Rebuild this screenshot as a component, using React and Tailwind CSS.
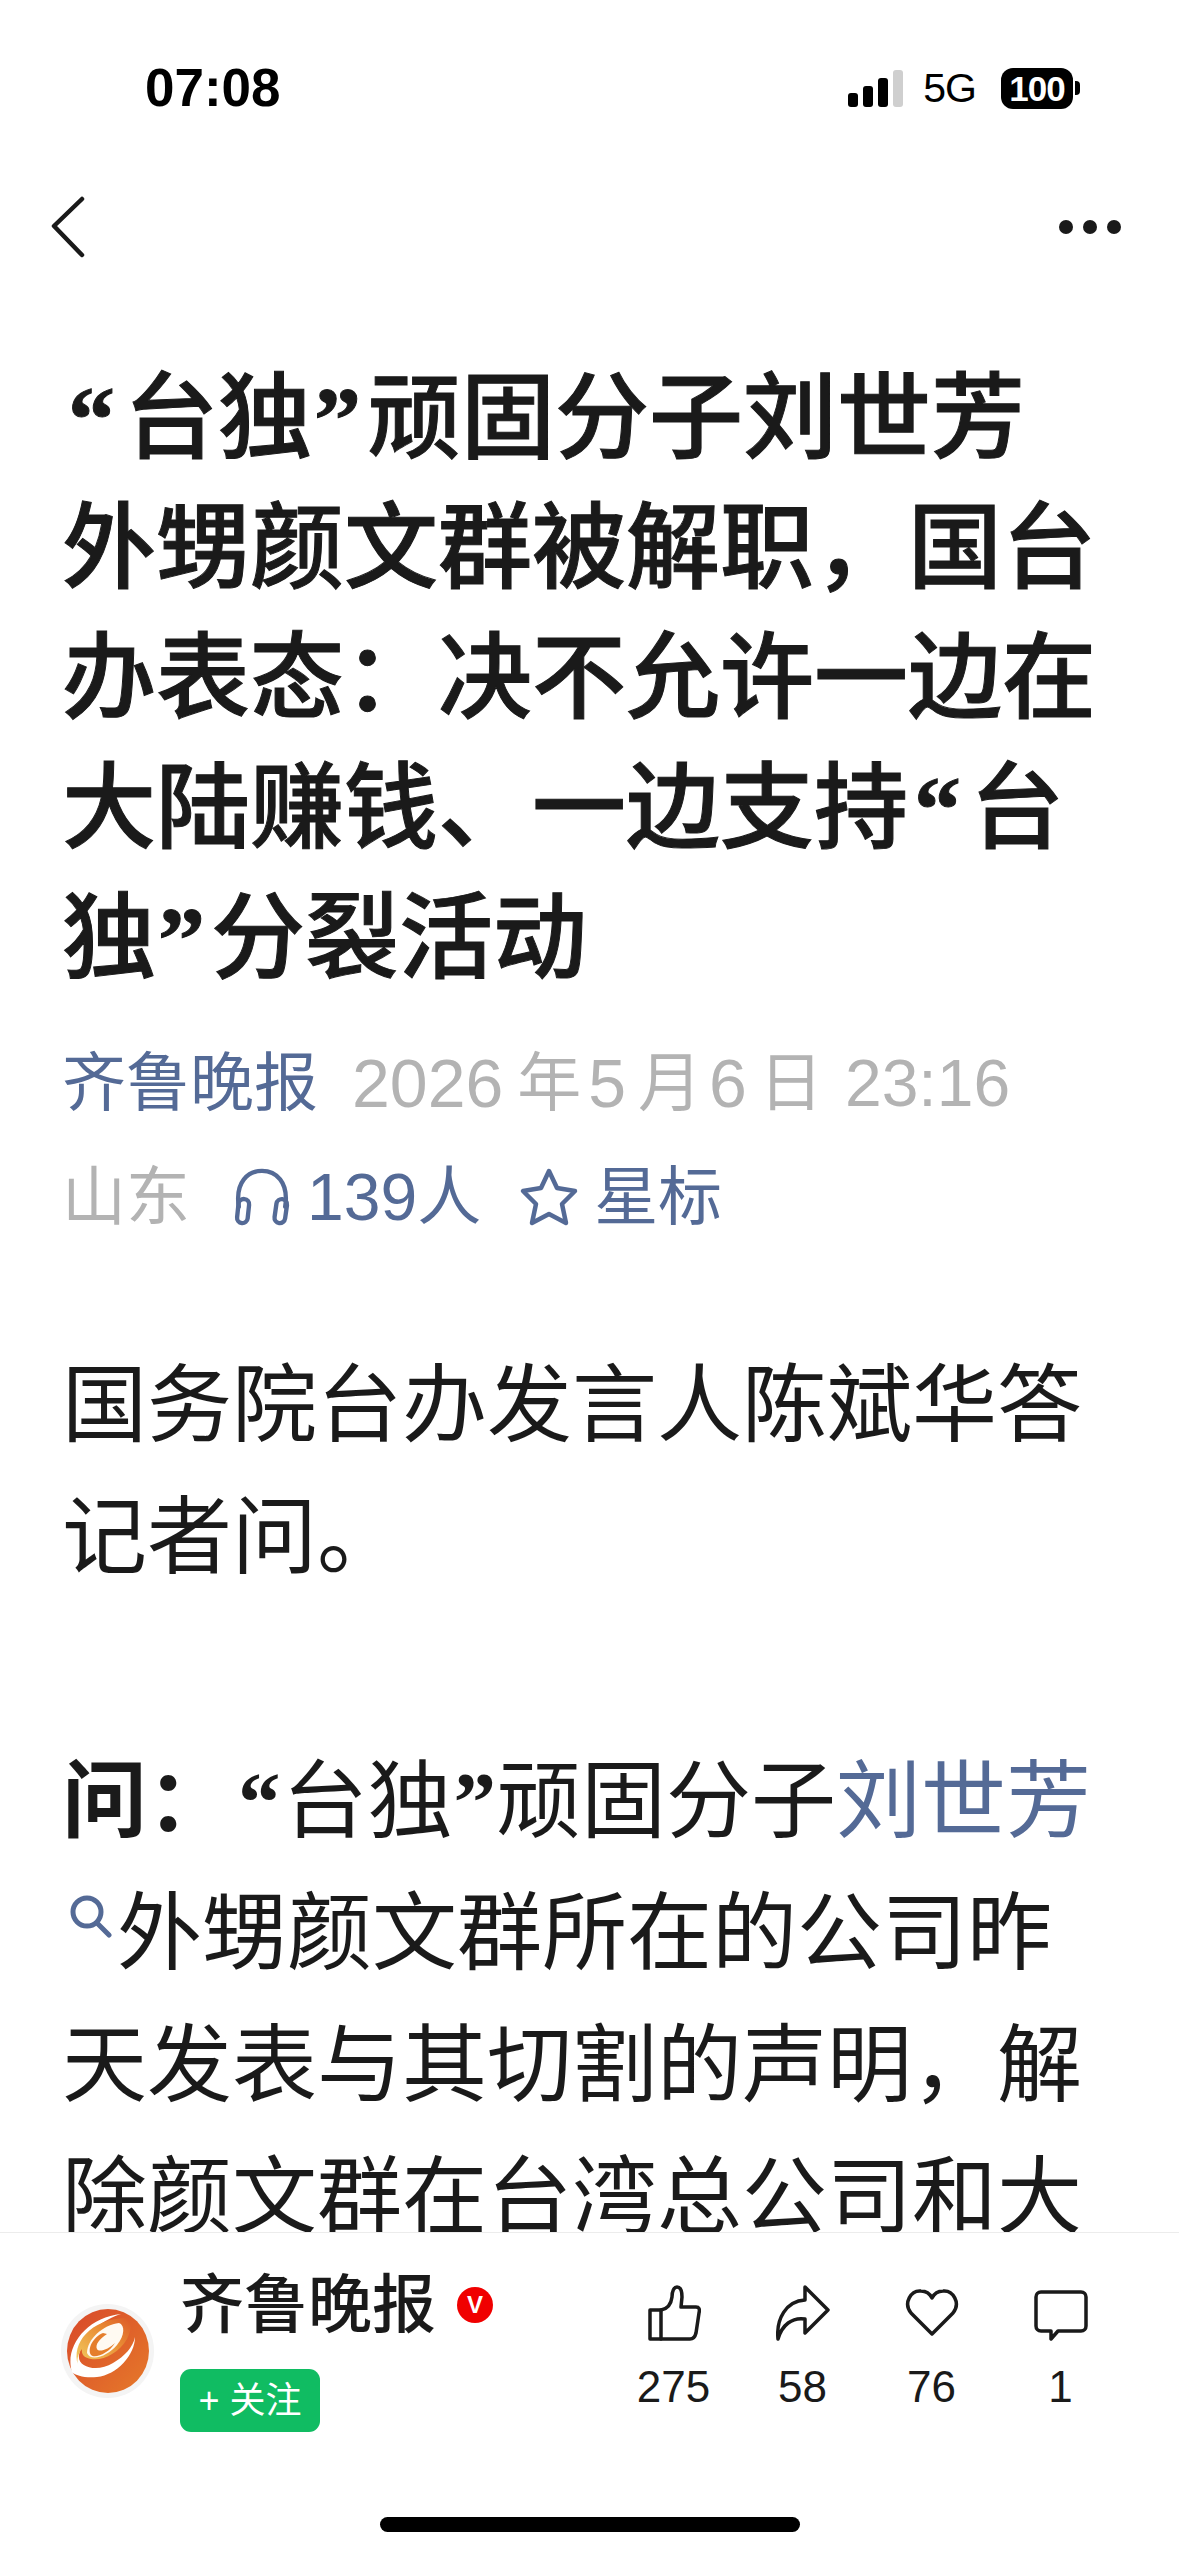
const cjk = { fontFamily: '"Liberation Sans", "Noto Sans CJK SC", sans-serif' };

const TitleOpen = () => <span className="font-bold [font-family:'Liberation_Serif'] ml-[6px] mr-[9px]">“</span>;
const TitleClose = () => <span className="font-bold [font-family:'Liberation_Serif'] ml-[2px] mr-[6px]">”</span>;
const BodyOpen = () => <span className="font-bold [font-family:'Liberation_Serif'] ml-[6px] mr-[2px]">“</span>;
const BodyClose = () => <span className="font-bold [font-family:'Liberation_Serif'] ml-[1px] mr-[0px]">”</span>;

function StatusBar() {
  return (
    <div className="flex items-center justify-between h-[176px] pl-[145px] pr-[99px]">
      <span className="text-[53px] font-bold text-black">07:08</span>
      <div className="flex items-center">
        <div className="flex items-end gap-[5px] h-[37px]">
          <div className="w-[10px] h-[14px] bg-black rounded-[3px]" />
          <div className="w-[10px] h-[21px] bg-black rounded-[3px]" />
          <div className="w-[10px] h-[29px] bg-black rounded-[3px]" />
          <div className="w-[10px] h-[37px] bg-[#cfcfcf] rounded-[3px]" />
        </div>
        <span className="ml-[20px] text-[41px] text-black leading-none tracking-[-1px]">5G</span>
        <div className="ml-[25px] flex items-center">
          <div className="w-[72px] h-[41px] bg-black rounded-[12px] flex items-center justify-center text-white font-bold text-[35px] leading-none tracking-[-1px]">100</div>
          <div className="w-[5px] h-[14px] bg-black rounded-r-[4px] ml-[2px]" />
        </div>
      </div>
    </div>
  );
}

function NavBar() {
  return (
    <div className="flex items-center justify-between pl-[50px] pr-[58px] h-[62px] mt-[20px]">
      <svg width="36" height="62" viewBox="0 0 36 62" fill="none" stroke="#1a1a1a" strokeWidth="4.5" strokeLinecap="round" strokeLinejoin="round">
        <path d="M32 3 L4 30 L32 59" />
      </svg>
      <div className="flex gap-[10px]">
        <div className="w-[14px] h-[14px] rounded-full bg-[#1a1a1a]" />
        <div className="w-[14px] h-[14px] rounded-full bg-[#1a1a1a]" />
        <div className="w-[14px] h-[14px] rounded-full bg-[#1a1a1a]" />
      </div>
    </div>
  );
}

function Article() {
  return (
    <div className="pl-[62px] whitespace-nowrap">
      <h1 className="text-[94px] font-medium leading-[130px] text-[#1a1a1a] mt-[96px] [-webkit-text-stroke:1px_#1a1a1a]">
        <div><TitleOpen />台独<TitleClose />顽固分子刘世芳</div>
        <div>外甥颜文群被解职，国台</div>
        <div>办表态：决不允许一边在</div>
        <div>大陆赚钱、一边支持<TitleOpen />台</div>
        <div>独<TitleClose />分裂活动</div>
      </h1>

      <div className="mt-[22px] text-[64px] leading-[114px]">
        <div className="flex items-center">
          <span className="text-[#546a96]">齐鲁晚报</span>
          <span className="flex items-center text-[#b3b3b3] ml-[34px]">
            <span className="text-[68px]">2026</span>
            <span className="ml-[14px]">年</span>
            <span className="ml-[7px] text-[68px]">5</span>
            <span className="ml-[12px]">月</span>
            <span className="ml-[7px] text-[68px]">6</span>
            <span className="ml-[12px]">日</span>
            <span className="ml-[22px] text-[66px]">23:16</span>
          </span>
        </div>
        <div className="flex items-center">
          <span className="text-[#b3b3b3]">山东</span>
          <svg className="ml-[43px]" width="58" height="58" viewBox="0 0 60 60" fill="none" stroke="#546a96" strokeWidth="4.5" strokeLinecap="round">
            <path d="M6 40 C2 14 16 3 30 3 C44 3 58 14 54 40" />
            <rect x="5" y="32" width="11" height="25" rx="5.5" transform="rotate(6 10 44)" />
            <rect x="44" y="32" width="11" height="25" rx="5.5" transform="rotate(8 49 44)" />
          </svg>
          <span className="text-[#546a96] ml-[16px] flex items-center">
            <span className="text-[66px]">139</span>
            <span>人</span>
          </span>
          <svg className="ml-[38px]" width="60" height="60" viewBox="0 0 60 60" fill="none" stroke="#546a96" strokeWidth="4.5" strokeLinejoin="round">
            <path d="M30 4 L38 21 L56 24 L43 37 L47 56 L30 47 L13 56 L17 37 L4 24 L22 21 Z" />
          </svg>
          <span className="text-[#546a96] ml-[15px]">星标</span>
        </div>
      </div>

      <div className="mt-[86px] text-[85px] leading-[132px] text-[#1a1a1a]">
        <div>国务院台办发言人陈斌华答</div>
        <div>记者问。</div>
        <div className="h-[132px]" />
        <div>
          <span className="font-bold">问：</span><BodyOpen />台独<BodyClose />顽固分子<span className="text-[#546a96]">刘世芳</span>
        </div>
        <div className="flex items-center">
          <svg className="ml-[8px] mr-[5px] -mt-[34px]" width="42" height="44" viewBox="0 0 42 44" fill="none" stroke="#546a96" strokeWidth="5" strokeLinecap="round">
            <circle cx="17" cy="17" r="14" />
            <path d="M27 28 L39 40" />
          </svg>
          外甥颜文群所在的公司昨
        </div>
        <div>天发表与其切割的声明，解</div>
        <div>除颜文群在台湾总公司和大</div>
      </div>
    </div>
  );
}

function Logo() {
  return (
    <div className="w-[93px] h-[94px] rounded-full bg-[#f4f4f4] flex items-center justify-center">
      <svg width="82" height="84" viewBox="0 0 82 84">
        <defs>
          <linearGradient id="base" x1="0" y1="0" x2="1" y2="1">
            <stop offset="0" stopColor="#d8482a" />
            <stop offset="1" stopColor="#e67a2a" />
          </linearGradient>
          <linearGradient id="swirl" x1="0" y1="1" x2="1" y2="0">
            <stop offset="0" stopColor="#f2cf62" />
            <stop offset="0.6" stopColor="#e98d34" />
            <stop offset="1" stopColor="#dc5a28" />
          </linearGradient>
        </defs>
        <ellipse cx="41" cy="42" rx="41" ry="42" fill="url(#base)" />
        <path d="M5 63 C-3 38 20 8 54 5 C38 10 16 24 12 46 C10 58 30 64 46 54 C58 47 66 38 68 28 C68 46 50 66 30 68 C18 69 9 67 5 63 Z" fill="#ffffff" />
        <path d="M11 56 C4 34 24 10 58 9 C64 11 66 18 60 30 C52 44 36 52 24 50 C18 49 14 46 15 40 C10 46 10 52 11 56 Z" fill="url(#swirl)" />
        <path d="M20 44 C20 30 36 16 52 14 C58 16 58 26 50 36 C42 46 24 54 20 44 Z" fill="#fffaf2" />
        <path d="M36 24 C26 28 20 40 24 46 C28 50 42 44 48 34 C42 40 32 44 30 40 C28 36 32 30 40 25 Z" fill="#e57e2c" />
      </svg>
    </div>
  );
}

function BottomBar() {
  const stats = [
    {
      label: '275',
      icon: (
        <svg width="54" height="56" viewBox="0 0 54 56" fill="none" stroke="#1a1a1a" strokeWidth="3.5" strokeLinejoin="round" strokeLinecap="round">
          <path d="M3 25 H14 V54 H3 Z" />
          <path d="M14 25 C20 24 24 20 25 12 C25 6 27 2 30 2 C34 2 35 6 35 12 L34 22 H49 C52 22 53 24 52 28 L49 48 C48 52 46 54 43 54 H14" />
        </svg>
      ),
    },
    {
      label: '58',
      icon: (
        <svg width="54" height="56" viewBox="0 0 54 56" fill="none" stroke="#1a1a1a" strokeWidth="3.5" strokeLinejoin="round" strokeLinecap="round">
          <path d="M29 2 L52 25 L29 48 V34 C16 32 6 40 2 54 C0 34 10 16 29 15 Z" />
        </svg>
      ),
    },
    {
      label: '76',
      icon: (
        <svg width="54" height="56" viewBox="0 0 54 56" fill="none" stroke="#1a1a1a" strokeWidth="3.5" strokeLinejoin="round">
          <path d="M27 49 L6 28 C-2 18 6 5 16 6 C21 6 25 9 27 13 C29 9 33 6 38 6 C48 5 56 18 48 28 Z" />
        </svg>
      ),
    },
    {
      label: '1',
      icon: (
        <svg width="54" height="56" viewBox="0 0 54 56" fill="none" stroke="#1a1a1a" strokeWidth="3.5" strokeLinejoin="round" strokeLinecap="round">
          <path d="M7 7 H47 C50 7 52 9 52 12 V41 C52 44 50 46 47 46 H24 L17 54 V46 H7 C4 46 2 44 2 41 V12 C2 9 4 7 7 7 Z" />
        </svg>
      ),
    },
  ];

  return (
    <div className="absolute left-0 right-0 bottom-0 h-[324px] bg-white border-t border-[#ececec]">
      <div className="flex items-start pl-[61px] pr-[60px] pt-[40px]">
        <div className="mt-[31px]">
          <Logo />
        </div>
        <div className="ml-[26px]">
          <div className="flex items-center leading-none">
            <span className="text-[64px] font-medium text-[#1a1a1a]">齐鲁晚报</span>
            <span className="ml-[21px] w-[36px] h-[36px] rounded-full bg-[#f00000] text-white text-[24px] font-bold flex items-center justify-center">V</span>
          </div>
          <div className="mt-[32px] w-[140px] h-[63px] rounded-[11px] bg-[#10bc62] text-white text-[36px] flex items-center justify-center">+ 关注</div>
        </div>
        <div className="ml-auto flex mt-[9px]">
          {stats.map((s) => (
            <div key={s.label} className="w-[117px] ml-[12px] flex flex-col items-center first:ml-0">
              <div className="h-[62px] flex items-center">{s.icon}</div>
              <span className="mt-[18px] text-[44px] leading-[50px] text-[#1a1a1a]">{s.label}</span>
            </div>
          ))}
        </div>
      </div>
      <div className="absolute left-[380px] bottom-[24px] w-[420px] h-[15px] bg-black rounded-full" />
    </div>
  );
}

export default function App() {
  return (
    <div className="relative w-[1179px] h-[2556px] overflow-hidden bg-white" style={cjk}>
      <StatusBar />
      <NavBar />
      <Article />
      <BottomBar />
    </div>
  );
}
